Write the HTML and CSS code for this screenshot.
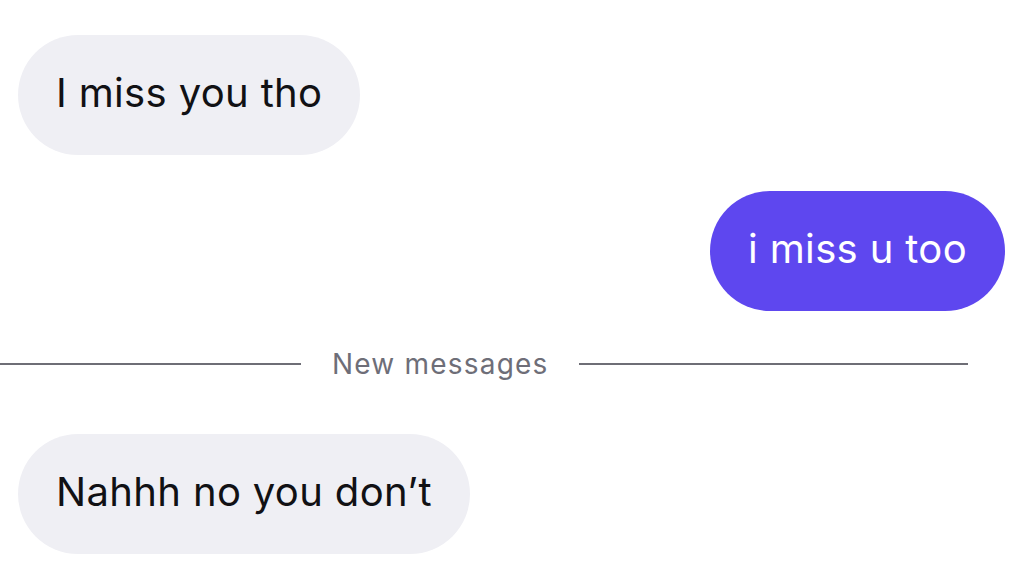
FILE: index.html
```html
<!DOCTYPE html>
<html>
<head>
<meta charset="utf-8">
<link rel="stylesheet" href="styles.css">
</head>
<body>
<div class="chat">
  <div class="row in"><div class="bubble gray">I miss you tho</div></div>
  <div class="row out"><div class="bubble purple">i miss u too</div></div>
  <div class="divider"><span class="line"></span><span class="label">New messages</span><span class="line right"></span></div>
  <div class="row in"><div class="bubble gray">Nahhh no you don’t</div></div>
</div>
</body>
</html>
```
FILE: styles.css
```css
html, body {
  margin: 0;
  padding: 0;
  background: #ffffff;
}
body {
  font-family: Inter, "Noto Sans", sans-serif;
  width: 1029px;
  height: 562px;
  overflow: hidden;
}
.chat {
  display: flex;
  flex-direction: column;
  padding-top: 35px;
}
.row {
  display: flex;
}
.row.in {
  padding-left: 18px;
}
.row.out {
  justify-content: flex-end;
  padding-right: 24px;
  margin-top: 36px;
}
.bubble {
  height: 120px;
  box-sizing: border-box;
  display: flex;
  align-items: center;
  padding: 0 38px 5px 38px;
  border-radius: 60px;
  font-size: 40px;
  letter-spacing: 0.35px;
  white-space: nowrap;
}
.gray {
  background: #efeff4;
  color: #111114;
}
.purple {
  background: #5e47ef;
  color: #ffffff;
}
.divider {
  display: flex;
  align-items: center;
  gap: 31px;
  width: 968px;
  height: 52px;
  margin-top: 27px;
  margin-bottom: 44px;
}
.line {
  height: 2px;
  background: #6e6e76;
  width: 301px;
}
.line.right {
  flex: 1;
}
.label {
  font-size: 28px;
  color: #6e6e78;
  letter-spacing: 1.2px;
  margin-right: -1px;
}
```
